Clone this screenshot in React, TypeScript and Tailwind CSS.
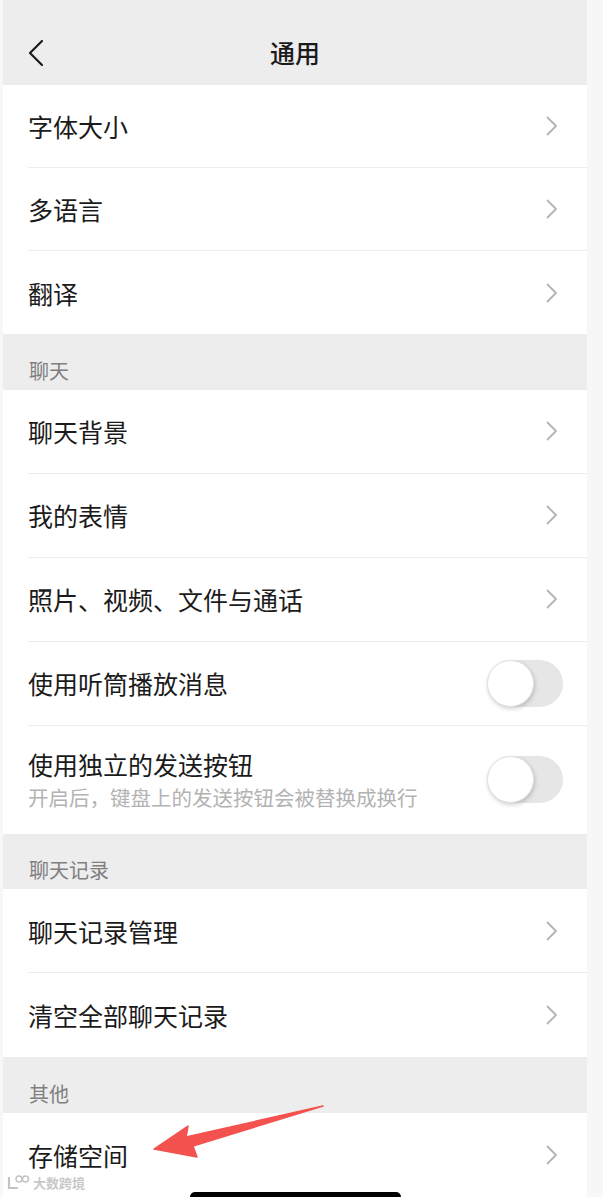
import React from 'react';

// 微信「通用」设置页 — 截图复刻

const Chevron = () => (
  <svg width="12" height="20" viewBox="0 0 12 20" fill="none">
    <path d="M1.5 1.5 L10 10 L1.5 18.5" stroke="#b4b4b4" strokeWidth="1.8" strokeLinecap="round" strokeLinejoin="round" />
  </svg>
);

const Toggle = () => (
  <div className="relative w-[76px] h-[47px] rounded-full bg-[#e6e6e6]">
    <div className="absolute left-0 top-0 w-[47px] h-[47px] rounded-full bg-white border border-[#e2e2e2] shadow-[1px_2px_4px_rgba(0,0,0,0.18)]" />
  </div>
);

type RowProps = {
  title: string;
  sub?: string;
  toggle?: boolean;
  last?: boolean;
  tall?: boolean;
  short?: boolean;
};

const Row: React.FC<RowProps> = ({ title, sub, toggle, last, tall, short }) => (
  <div className="pl-[25px] bg-white">
    <div
      className={`flex items-center justify-between ${tall ? 'h-[108px]' : short ? 'h-[83px]' : 'h-[84px]'} ${toggle ? 'pr-[24px]' : 'pr-[29px]'} ${last ? '' : 'border-b border-[#ececec]'}`}
    >
      <div className="flex flex-col">
        <span className="text-[25px] leading-[30px] text-[#1b1b1b]">{title}</span>
        {sub && <span className="text-[20.5px] leading-[28px] mt-[4px] text-[#b3b3b3]">{sub}</span>}
      </div>
      {toggle ? <Toggle /> : <Chevron />}
    </div>
  </div>
);

const Section = ({ label }: { label: string }) => (
  <div className="h-[56px] bg-[#ededed] pl-[26px] flex items-end pb-[5px]">
    <span className="text-[20px] leading-[28px] text-[#7f7f7f]">{label}</span>
  </div>
);

export default function App() {
  return (
    <div
      className="relative w-[603px] h-[1197px] overflow-hidden bg-[#f7f7f7]"
      style={{ fontFamily: '"Noto Sans CJK SC", "Noto Sans", sans-serif' }}
    >
      <div className="ml-[3px] w-[584px] h-full bg-white flex flex-col">
        {/* 顶部导航 */}
        <div className="relative h-[86px] bg-[#ededed] flex items-center justify-center pt-[20px]">
          <svg className="absolute left-[24px] top-[39px]" width="18" height="28" viewBox="0 0 18 28" fill="none">
            <path d="M15 2 L3 14 L15 26" stroke="#1b1b1b" strokeWidth="2.2" strokeLinecap="round" strokeLinejoin="round" />
          </svg>
          <span className="text-[25px] font-medium text-[#1b1b1b]">通用</span>
        </div>

        <Row title="字体大小" short />
        <Row title="多语言" short />
        <Row title="翻译" short last />

        <Section label="聊天" />
        <Row title="聊天背景" />
        <Row title="我的表情" />
        <Row title="照片、视频、文件与通话" />
        <Row title="使用听筒播放消息" toggle />
        <Row title="使用独立的发送按钮" sub="开启后，键盘上的发送按钮会被替换成换行" toggle tall last />

        <Section label="聊天记录" />
        <Row title="聊天记录管理" />
        <Row title="清空全部聊天记录" last />

        <Section label="其他" />
        <Row title="存储空间" last />
      </div>

      {/* 红色标注箭头 */}
      <svg className="absolute left-0 top-0 pointer-events-none" width="603" height="1197" viewBox="0 0 603 1197">
        <polygon
          points="154,1149 188,1126 186,1137 323,1106 193,1146 197,1157"
          fill="#f4524f"
          stroke="#f4524f"
          strokeWidth="1.5"
          strokeLinejoin="round"
        />
      </svg>

      {/* 水印 */}
      <div className="absolute left-[6px] top-[1175px] flex items-center gap-[3px] text-[#c8c8c8]">
        <svg width="24" height="15" viewBox="0 0 24 15" fill="none">
          <path d="M3 2 L3 13 L12 13" stroke="#c4c4c4" strokeWidth="2.2" fill="none" />
          <circle cx="13" cy="4" r="3" stroke="#c4c4c4" strokeWidth="1.5" fill="none" />
          <circle cx="19.5" cy="4" r="3" stroke="#c4c4c4" strokeWidth="1.5" fill="none" />
        </svg>
        <span className="text-[13px] leading-[14px] font-bold">大数跨境</span>
      </div>

      {/* 底部 Home 指示条 */}
      <div className="absolute left-[190px] top-[1192px] w-[211px] h-[10px] rounded-full bg-black" />
    </div>
  );
}
